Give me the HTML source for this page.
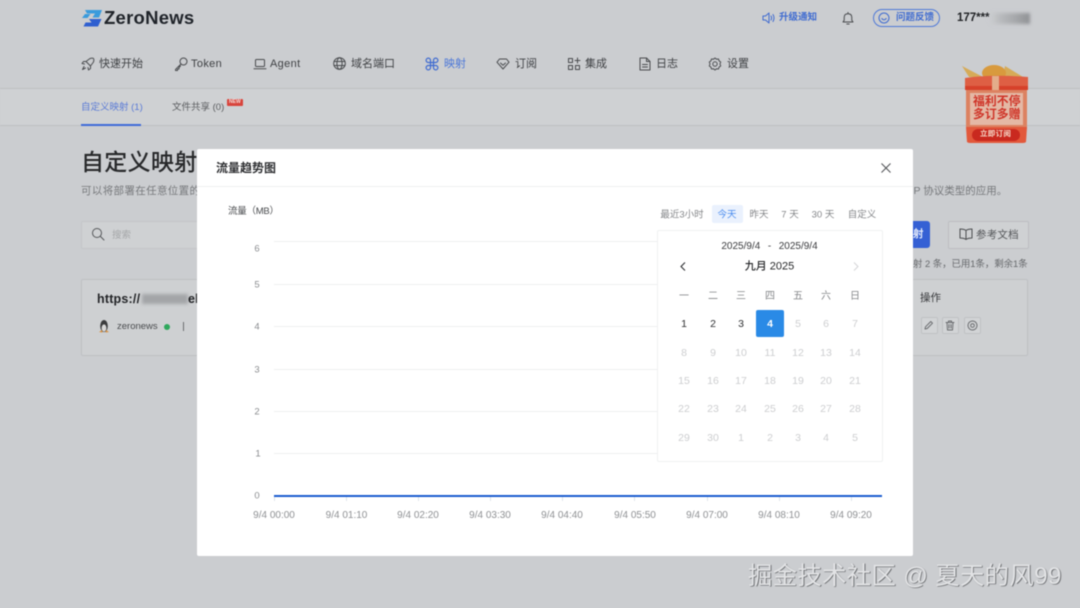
<!DOCTYPE html>
<html lang="zh">
<head>
<meta charset="utf-8">
<style>
html,body{margin:0;padding:0;width:1080px;height:608px;overflow:hidden;background:#cbcdd0}
body{position:relative;font-family:"Liberation Sans","Noto Sans CJK SC",sans-serif;color:#3a3b3d}
#root{position:absolute;left:0;top:0;width:1080px;height:608px;filter:blur(.45px)}
.t{position:absolute;white-space:nowrap;line-height:1}
.c{transform:translate(-50%,-50%)}
.a{position:absolute}
svg{position:absolute;overflow:visible}
.nav{font-size:11px;color:#3f4144}
.lat{letter-spacing:.35px}
.s{fill:none;stroke:#4a4c4f;stroke-width:1;stroke-linecap:round;stroke-linejoin:round}
.b{fill:none;stroke:#3f6bd0;stroke-width:1;stroke-linecap:round;stroke-linejoin:round}
.d{font-size:10.5px;color:#cdced0}
.w{font-size:10px;color:#85878a}
.dk{font-size:10.5px;color:#2e2f31}
.y{font-size:9.5px;color:#8b8d90}
.x{font-size:10px;color:#8f9194}
.g{position:absolute;left:274px;width:608px;height:1px;background:#eeeff0}
.tk{position:absolute;top:496px;width:1px;height:5px;background:#dfe3ea}
.f{font-size:9.5px;color:#85878a}
.ab{position:absolute;top:317px;width:15px;height:15px;border:1px solid #bfc1c4;border-radius:2px;background:#d2d4d6}
</style>
</head>
<body>
<div id="root">

<!-- Logo -->
<svg style="left:81px;top:9px" width="22" height="18" viewBox="0 0 22 18">
<path d="M4 1H21L18 8.500H11.500L14 4.500H6Z" fill="#3a9bdc"/>
<path d="M1 9L4 5H9.500L6.500 9Z" fill="#3a9bdc"/>
<path d="M8 10H20.500L17 17.500H2.500L4.500 13.500H10.500Z" fill="#2f5fd0"/>
</svg>
<div class="t" style="left:104px;top:9px;font-size:18.500px;font-weight:700;color:#1f2329;letter-spacing:.25px">ZeroNews</div>

<!-- Header right -->
<svg style="left:762px;top:12px" width="14" height="12" viewBox="0 0 14 12">
<path class="b" d="M1 4H3.500L7 1V11L3.500 8H1Z"/><path class="b" d="M9 4Q10.200 6 9 8"/><path class="b" d="M11 2.500Q13 6 11 9.500"/>
</svg>
<div class="t" style="left:779px;top:13px;font-size:9.500px;color:#3f6bd0;font-weight:700">升级通知</div>
<svg style="left:842px;top:12px" width="12" height="13" viewBox="0 0 12 13">
<path class="s" d="M1 10H11L9.800 8.200V5.500Q9.800 1.700 6 1.700T2.200 5.500V8.200Z"/><path class="s" d="M4.800 12H7.200M6 .5V1.500"/>
</svg>
<div class="a" style="left:873px;top:9px;width:65px;height:16px;border:1px solid #4f79d8;border-radius:9px"></div>
<svg style="left:869px;top:12px" width="12" height="12" viewBox="0 0 12 12" preserveAspectRatio="none">
<circle class="b" cx="15" cy="6" r="5"/><path class="b" d="M12.800 6.500Q15 9.200 17.200 6.500"/>
</svg>
<div class="t" style="left:896px;top:13px;font-size:9.500px;color:#3f6bd0;font-weight:700">问题反馈</div>
<div class="t" style="left:957px;top:13px;font-size:11.500px;font-weight:700;color:#1f2124">177***</div>
<div class="a" style="left:990px;top:13px;width:40px;height:11px;background:linear-gradient(90deg,#cbcdd0 0,#b6b8bb 30%,#a5a7aa 65%,#8e9093 100%);filter:blur(1.500px)"></div>

<!-- Nav -->
<svg style="left:81px;top:57px" width="14" height="14" viewBox="0 0 14 14">
<path class="s" d="M5 4.500L9 1.500Q11.500 .8 12.500 1.500Q13.200 2.500 12.500 5L9.500 9L5 4.500Z"/><path class="s" d="M5 4.500H2.500L1 6.500L3.500 7M9.500 9V11.500L7.500 13L7 10.500M3 9.500L1.500 12.500L4.500 11"/>
</svg>
<div class="t nav" style="left:99px;top:58.500px">快速开始</div>
<svg style="left:174px;top:57px" width="14" height="14" viewBox="0 0 14 14">
<circle class="s" cx="9.500" cy="4.500" r="3.500"/><path class="s" d="M7 7L1.500 12.500V13.500H3.500V12H5V10.500L6.500 9"/>
</svg>
<div class="t nav lat" style="left:191px;top:59px">Token</div>
<svg style="left:253px;top:58px" width="14" height="12" viewBox="0 0 14 12">
<rect class="s" x="2.500" y="1.500" width="9" height="7" rx="1"/><path class="s" d="M1 10.800H13"/>
</svg>
<div class="t nav lat" style="left:270px;top:59px">Agent</div>
<svg style="left:333px;top:57px" width="13" height="13" viewBox="0 0 13 13">
<circle class="s" cx="6.500" cy="6.500" r="5.800"/><ellipse class="s" cx="6.500" cy="6.500" rx="2.600" ry="5.800"/><path class="s" d="M1 4.500H12M1 8.500H12"/>
</svg>
<div class="t nav" style="left:351px;top:58.500px">域名端口</div>
<svg style="left:425px;top:57px" width="14" height="14" viewBox="0 0 14 14">
<path class="b" d="M5.500 5.500H3.500A2.200 2.200 0 1 1 5.500 3.500V5.500ZM8.500 5.500H10.500A2.200 2.200 0 1 0 8.500 3.500V5.500ZM5.500 8.500H3.500A2.200 2.200 0 1 0 5.500 10.500V8.500ZM8.500 8.500H10.500A2.200 2.200 0 1 1 8.500 10.500V8.500Z" style="stroke-width:1.200"/><path class="b" d="M5.500 5.500H8.500V8.500H5.500Z" style="stroke-width:1.200"/>
</svg>
<div class="t nav" style="left:444px;top:58.500px;color:#4a76d8">映射</div>
<svg style="left:496px;top:58px" width="14" height="12" viewBox="0 0 14 12">
<path class="s" d="M3.500 1H10.500L13 4.200L7 11L1 4.200Z"/><path class="s" d="M4.500 5L7 7.200L9.500 5"/>
</svg>
<div class="t nav" style="left:515px;top:58.500px">订阅</div>
<svg style="left:567px;top:57px" width="14" height="14" viewBox="0 0 14 14">
<rect class="s" x="1.500" y="1.500" width="4" height="4"/><rect class="s" x="1.500" y="8.500" width="4" height="4"/><rect class="s" x="8.500" y="8.500" width="4" height="4"/><path class="s" d="M10.500 1V6M8 3.500H13"/>
</svg>
<div class="t nav" style="left:585px;top:58.500px">集成</div>
<svg style="left:639px;top:57px" width="12" height="14" viewBox="0 0 12 14">
<path class="s" d="M1 1H7.500L11 4.500V13H1Z"/><path class="s" d="M7.500 1V4.500H11M3.500 7.500H8.500M3.500 10H8.500"/>
</svg>
<div class="t nav" style="left:656px;top:58.500px">日志</div>
<svg style="left:708px;top:57px" width="14" height="14" viewBox="0 0 14 14">
<path class="s" d="M7 1L8.500 2.200L10.500 2L11 3.800L12.700 5L12 7L12.700 9L11 10.200L10.500 12L8.500 11.800L7 13L5.500 11.800L3.500 12L3 10.200L1.300 9L2 7L1.300 5L3 3.800L3.500 2L5.500 2.200Z"/><circle class="s" cx="7" cy="7" r="2.200"/>
</svg>
<div class="t nav" style="left:727px;top:58.500px">设置</div>

<!-- Lines & subnav -->
<div class="a" style="left:0;top:88px;width:1080px;height:38px;background:#cfd1d3"></div>
<div class="a" style="left:0;top:88px;width:1080px;height:1px;background:#bdbfc2"></div>
<div class="a" style="left:0;top:125px;width:1080px;height:1px;background:#bdbfc2"></div>
<div class="t" style="left:81px;top:103px;font-size:9.500px;color:#5b7bd6">自定义映射 (1)</div>
<div class="a" style="left:81px;top:124px;width:60px;height:2px;background:#3f6bd8"></div>
<div class="t" style="left:172px;top:103px;font-size:9.500px;color:#5b5d60">文件共享 (0)</div>
<div class="a" style="left:227px;top:99px;width:16px;height:7px;background:#d8443c;border-radius:1px"></div>
<div class="t" style="left:229px;top:100px;font-size:5px;font-weight:700;color:#f4dcd8">NEW</div>

<!-- Gift -->
<svg style="left:961px;top:64px" width="68" height="80" viewBox="0 0 68 80">
<path d="M1 2L8 13H22Z" fill="#d6ab58"/>
<path d="M44 2L62 13H42Z" fill="#d6ab58"/>
<ellipse cx="33" cy="9" rx="12" ry="8" fill="#d89a3e"/>
<path d="M4 14Q30 10 67 13V26H4Z" fill="#de5f44"/>
<rect x="4" y="22" width="63" height="4" fill="#d6412a"/>
<rect x="31" y="12" width="7" height="14" fill="#e3ad8a"/>
<rect x="5" y="26" width="61" height="37" fill="#dc8261"/>
<rect x="9" y="29" width="53" height="32" fill="#e4b8a5"/>
<path d="M5 63H66L65 78Q64 79 62 79H9Q7 79 6 78Z" fill="#e2583b"/>
<rect x="11" y="65" width="48" height="12" rx="6" fill="#c9291f"/>
</svg>
<div class="t" style="left:973px;top:96px;font-size:11.800px;color:#cf3428;font-weight:700;letter-spacing:.1px">福利不停</div>
<div class="t" style="left:973px;top:109px;font-size:11.800px;color:#cf3428;font-weight:700;letter-spacing:.1px">多订多赠</div>
<div class="t" style="left:980px;top:130px;font-size:7.500px;color:#f6d8c8;font-weight:700;letter-spacing:.3px">立即订阅</div>

<!-- Page content -->
<div class="t" style="left:81px;top:151px;font-size:23px;font-weight:500;color:#27282a;letter-spacing:.3px">自定义映射</div>
<div class="t" style="left:81px;top:186px;font-size:10.500px;color:#77797c;letter-spacing:.35px">可以将部署在任意位置的</div>
<div class="t" style="left:913.500px;top:186px;font-size:10.500px;color:#77797c">P 协议类型的应用。</div>

<div class="a" style="left:81px;top:221px;width:130px;height:26px;border:1px solid #c3c5c8;border-radius:2px;background:#cfd1d3"></div>
<svg style="left:91px;top:227px" width="14" height="14" viewBox="0 0 14 14">
<circle class="s" cx="6" cy="6" r="4.500" style="stroke:#55575a"/><path class="s" d="M9.500 9.500L13 13" style="stroke:#55575a"/>
</svg>
<div class="t" style="left:112px;top:230.500px;font-size:9.500px;color:#a6a8aa">搜索</div>

<div class="a" style="left:81px;top:279px;width:130px;height:75px;border:1px solid #bec0c3;border-radius:2px;background:#ced0d2"></div>
<div class="t" style="left:97px;top:292.500px;font-size:12.500px;font-weight:700;color:#232427;letter-spacing:.2px">https://</div>
<div class="a" style="left:142px;top:294px;width:46px;height:10px;background:#a3a5a8;filter:blur(1.500px)"></div>
<div class="t" style="left:188px;top:292.500px;font-size:12.500px;font-weight:700;color:#232427">ek</div>
<svg style="left:98px;top:319px" width="12" height="14" viewBox="0 0 12 14">
<ellipse cx="6" cy="7" rx="3.800" ry="6" fill="#3b3c3e"/><ellipse cx="6" cy="9" rx="2.400" ry="3.600" fill="#d8d8d8"/><path d="M1 13L4 11L4.500 13.500ZM11 13L8 11L7.500 13.500Z" fill="#d98f3c"/>
</svg>
<div class="t" style="left:117px;top:322px;font-size:9.500px;color:#4a4c4f">zeronews</div>
<div class="a" style="left:164px;top:323.500px;width:6px;height:6px;border-radius:50%;background:#2fa85c"></div>
<div class="a" style="left:183px;top:321.500px;width:1px;height:9px;background:#6a6c6f"></div>

<!-- Right side page content -->
<div class="a" style="left:913px;top:221px;width:17px;height:27px;background:#3560d4;border-radius:0 3px 3px 0"></div>
<div class="t" style="left:913px;top:229px;font-size:10.500px;color:#e6ecfa;font-weight:700">射</div>
<div class="a" style="left:948px;top:221px;width:79px;height:26px;border:1px solid #bcbec1;border-radius:2px;background:#cfd1d3"></div>
<svg style="left:959px;top:228px" width="14" height="12" viewBox="0 0 14 12">
<path class="s" d="M7 2.500Q5 1 1 1V10Q5 10 7 11.500Q9 10 13 10V1Q9 1 7 2.500ZM7 2.500V11.500"/>
</svg>
<div class="t" style="left:976px;top:229.500px;font-size:10.500px;color:#55575a;letter-spacing:.2px">参考文档</div>
<div class="t" style="left:913px;top:259px;font-size:9.400px;color:#66686b">射 2 条，已用1条，剩余1条</div>

<div class="a" style="left:913px;top:279px;width:114px;height:75px;border:1px solid #bec0c3;border-left:0;border-radius:0 2px 2px 0;background:#ced0d2"></div>
<div class="t" style="left:920px;top:293px;font-size:10.500px;color:#3a3b3e">操作</div>
<div class="ab" style="left:921px"></div>
<svg style="left:924px;top:320px" width="10" height="10" viewBox="0 0 10 10"><path class="s" d="M1 9L1.500 6.800L6.800 1.500L8.500 3.200L3.200 8.500Z" style="stroke:#6a6c6f"/></svg>
<div class="ab" style="left:942px"></div>
<svg style="left:945px;top:320px" width="10" height="11" viewBox="0 0 10 11"><path class="s" d="M1 2.500H9M3.500 2.500V1H6.500V2.500M2 2.500L2.500 10H7.500L8 2.500M4 4.500V8M6 4.500V8" style="stroke:#6a6c6f"/></svg>
<div class="ab" style="left:964px"></div>
<svg style="left:967px;top:320px" width="11" height="11" viewBox="0 0 11 11"><circle class="s" cx="5.500" cy="5.500" r="4.500" style="stroke:#6a6c6f;stroke-dasharray:2 .6"/><circle class="s" cx="5.500" cy="5.500" r="1.800" style="stroke:#6a6c6f"/></svg>

<!-- Modal -->
<div class="a" style="left:197px;top:149px;width:716px;height:407px;background:#fff;border-radius:2px"></div>
<div class="a" style="left:197px;top:186px;width:716px;height:1px;background:#eeeff0"></div>
<div class="t" style="left:216px;top:161.500px;font-size:12px;font-weight:700;color:#2e2f32">流量趋势图</div>
<svg style="left:881px;top:163px" width="10" height="10" viewBox="0 0 10 10"><path d="M.5 .5L9.500 9.500M9.500 .5L.5 9.500" stroke="#55575a" stroke-width="1.100" fill="none"/></svg>

<div class="t" style="left:228px;top:206.500px;font-size:9.500px;color:#4a4c4f;letter-spacing:-.25px">流量（MB）</div>

<!-- Grid -->
<div class="g" style="top:241px"></div>
<div class="g" style="top:284px"></div>
<div class="g" style="top:326px"></div>
<div class="g" style="top:369px"></div>
<div class="g" style="top:411px"></div>
<div class="g" style="top:453px"></div>
<div class="t y c" style="left:257px;top:249px">6</div>
<div class="t y c" style="left:257px;top:284.500px">5</div>
<div class="t y c" style="left:257px;top:327px">4</div>
<div class="t y c" style="left:257px;top:369.500px">3</div>
<div class="t y c" style="left:257px;top:411.500px">2</div>
<div class="t y c" style="left:258px;top:453.500px">1</div>
<div class="t y c" style="left:257px;top:496px">0</div>
<div class="tk" style="left:274px"></div><div class="tk" style="left:346px"></div><div class="tk" style="left:418px"></div><div class="tk" style="left:490px"></div><div class="tk" style="left:562px"></div><div class="tk" style="left:634px"></div><div class="tk" style="left:707px"></div><div class="tk" style="left:779px"></div><div class="tk" style="left:851px"></div>
<div class="a" style="left:274px;top:495px;width:608px;height:2px;background:#1a5ccf"></div>
<div class="t x c" style="left:274px;top:515.500px">9/4 00:00</div>
<div class="t x c" style="left:346.500px;top:515.500px">9/4 01:10</div>
<div class="t x c" style="left:418px;top:515.500px">9/4 02:20</div>
<div class="t x c" style="left:490px;top:515.500px">9/4 03:30</div>
<div class="t x c" style="left:562px;top:515.500px">9/4 04:40</div>
<div class="t x c" style="left:635px;top:515.500px">9/4 05:50</div>
<div class="t x c" style="left:707px;top:515.500px">9/4 07:00</div>
<div class="t x c" style="left:779px;top:515.500px">9/4 08:10</div>
<div class="t x c" style="left:851px;top:515.500px">9/4 09:20</div>

<!-- Filters -->
<div class="t f c" style="left:682px;top:214.500px">最近3小时</div>
<div class="a" style="left:712px;top:205px;width:31px;height:18px;background:#eaf1fd;border-radius:2px"></div>
<div class="t f c" style="left:727px;top:214.500px;color:#4a8cee">今天</div>
<div class="t f c" style="left:759px;top:214.500px">昨天</div>
<div class="t f c" style="left:790px;top:214.500px">7 天</div>
<div class="t f c" style="left:823px;top:214.500px">30 天</div>
<div class="t f c" style="left:862px;top:214.500px">自定义</div>

<!-- Calendar -->
<div class="a" style="left:657px;top:230px;width:224px;height:230px;background:#fff;border:1px solid #f0f1f2;border-radius:2px"></div>
<div class="t c" style="left:769.500px;top:246.500px;font-size:10px;color:#3a3b3e;word-spacing:1px">2025/9/4 &nbsp;-&nbsp; 2025/9/4</div>
<svg style="left:680px;top:262px" width="6" height="9" viewBox="0 0 6 9"><path d="M5 .5L1 4.500L5 8.500" fill="none" stroke="#2e2f32" stroke-width="1.100"/></svg>
<div class="t c" style="left:769.500px;top:266.500px;font-size:11px;font-weight:500;color:#27282a">九月 2025</div>
<svg style="left:853px;top:262px" width="6" height="9" viewBox="0 0 6 9"><path d="M1 .5L5 4.500L1 8.500" fill="none" stroke="#d4d5d7" stroke-width="1"/></svg>

<div class="t w c" style="left:684px;top:296.500px">一</div><div class="t w c" style="left:713px;top:296.500px">二</div><div class="t w c" style="left:741px;top:296.500px">三</div><div class="t w c" style="left:770px;top:296.500px">四</div><div class="t w c" style="left:798px;top:296.500px">五</div><div class="t w c" style="left:826px;top:296.500px">六</div><div class="t w c" style="left:855px;top:296.500px">日</div>

<div class="t dk c" style="left:684px;top:323.500px">1</div><div class="t dk c" style="left:713px;top:323.500px">2</div><div class="t dk c" style="left:741px;top:323.500px">3</div>
<div class="a" style="left:756px;top:310px;width:28px;height:27px;background:#2a8ae6;border-radius:2px"></div>
<div class="t c" style="left:770px;top:323.500px;font-size:10.500px;font-weight:700;color:#fff">4</div>
<div class="t d c" style="left:798px;top:323.500px">5</div><div class="t d c" style="left:826px;top:323.500px">6</div><div class="t d c" style="left:855px;top:323.500px">7</div>

<div class="t d c" style="left:684px;top:352.500px">8</div><div class="t d c" style="left:713px;top:352.500px">9</div><div class="t d c" style="left:741px;top:352.500px">10</div><div class="t d c" style="left:770px;top:352.500px">11</div><div class="t d c" style="left:798px;top:352.500px">12</div><div class="t d c" style="left:826px;top:352.500px">13</div><div class="t d c" style="left:855px;top:352.500px">14</div>

<div class="t d c" style="left:684px;top:380.500px">15</div><div class="t d c" style="left:713px;top:380.500px">16</div><div class="t d c" style="left:741px;top:380.500px">17</div><div class="t d c" style="left:770px;top:380.500px">18</div><div class="t d c" style="left:798px;top:380.500px">19</div><div class="t d c" style="left:826px;top:380.500px">20</div><div class="t d c" style="left:855px;top:380.500px">21</div>

<div class="t d c" style="left:684px;top:408.500px">22</div><div class="t d c" style="left:713px;top:408.500px">23</div><div class="t d c" style="left:741px;top:408.500px">24</div><div class="t d c" style="left:770px;top:408.500px">25</div><div class="t d c" style="left:798px;top:408.500px">26</div><div class="t d c" style="left:826px;top:408.500px">27</div><div class="t d c" style="left:855px;top:408.500px">28</div>

<div class="t d c" style="left:684px;top:437.500px">29</div><div class="t d c" style="left:713px;top:437.500px">30</div><div class="t d c" style="left:741px;top:437.500px">1</div><div class="t d c" style="left:770px;top:437.500px">2</div><div class="t d c" style="left:798px;top:437.500px">3</div><div class="t d c" style="left:826px;top:437.500px">4</div><div class="t d c" style="left:855px;top:437.500px">5</div>

<!-- Watermark -->
<div class="t" style="left:748px;top:564.500px;font-size:24.500px;letter-spacing:.2px;color:#e2e3e5;text-shadow:.7px .7px .6px #4f5154">掘金技术社区 @ 夏天的风99</div>

</div>
</body>
</html>
